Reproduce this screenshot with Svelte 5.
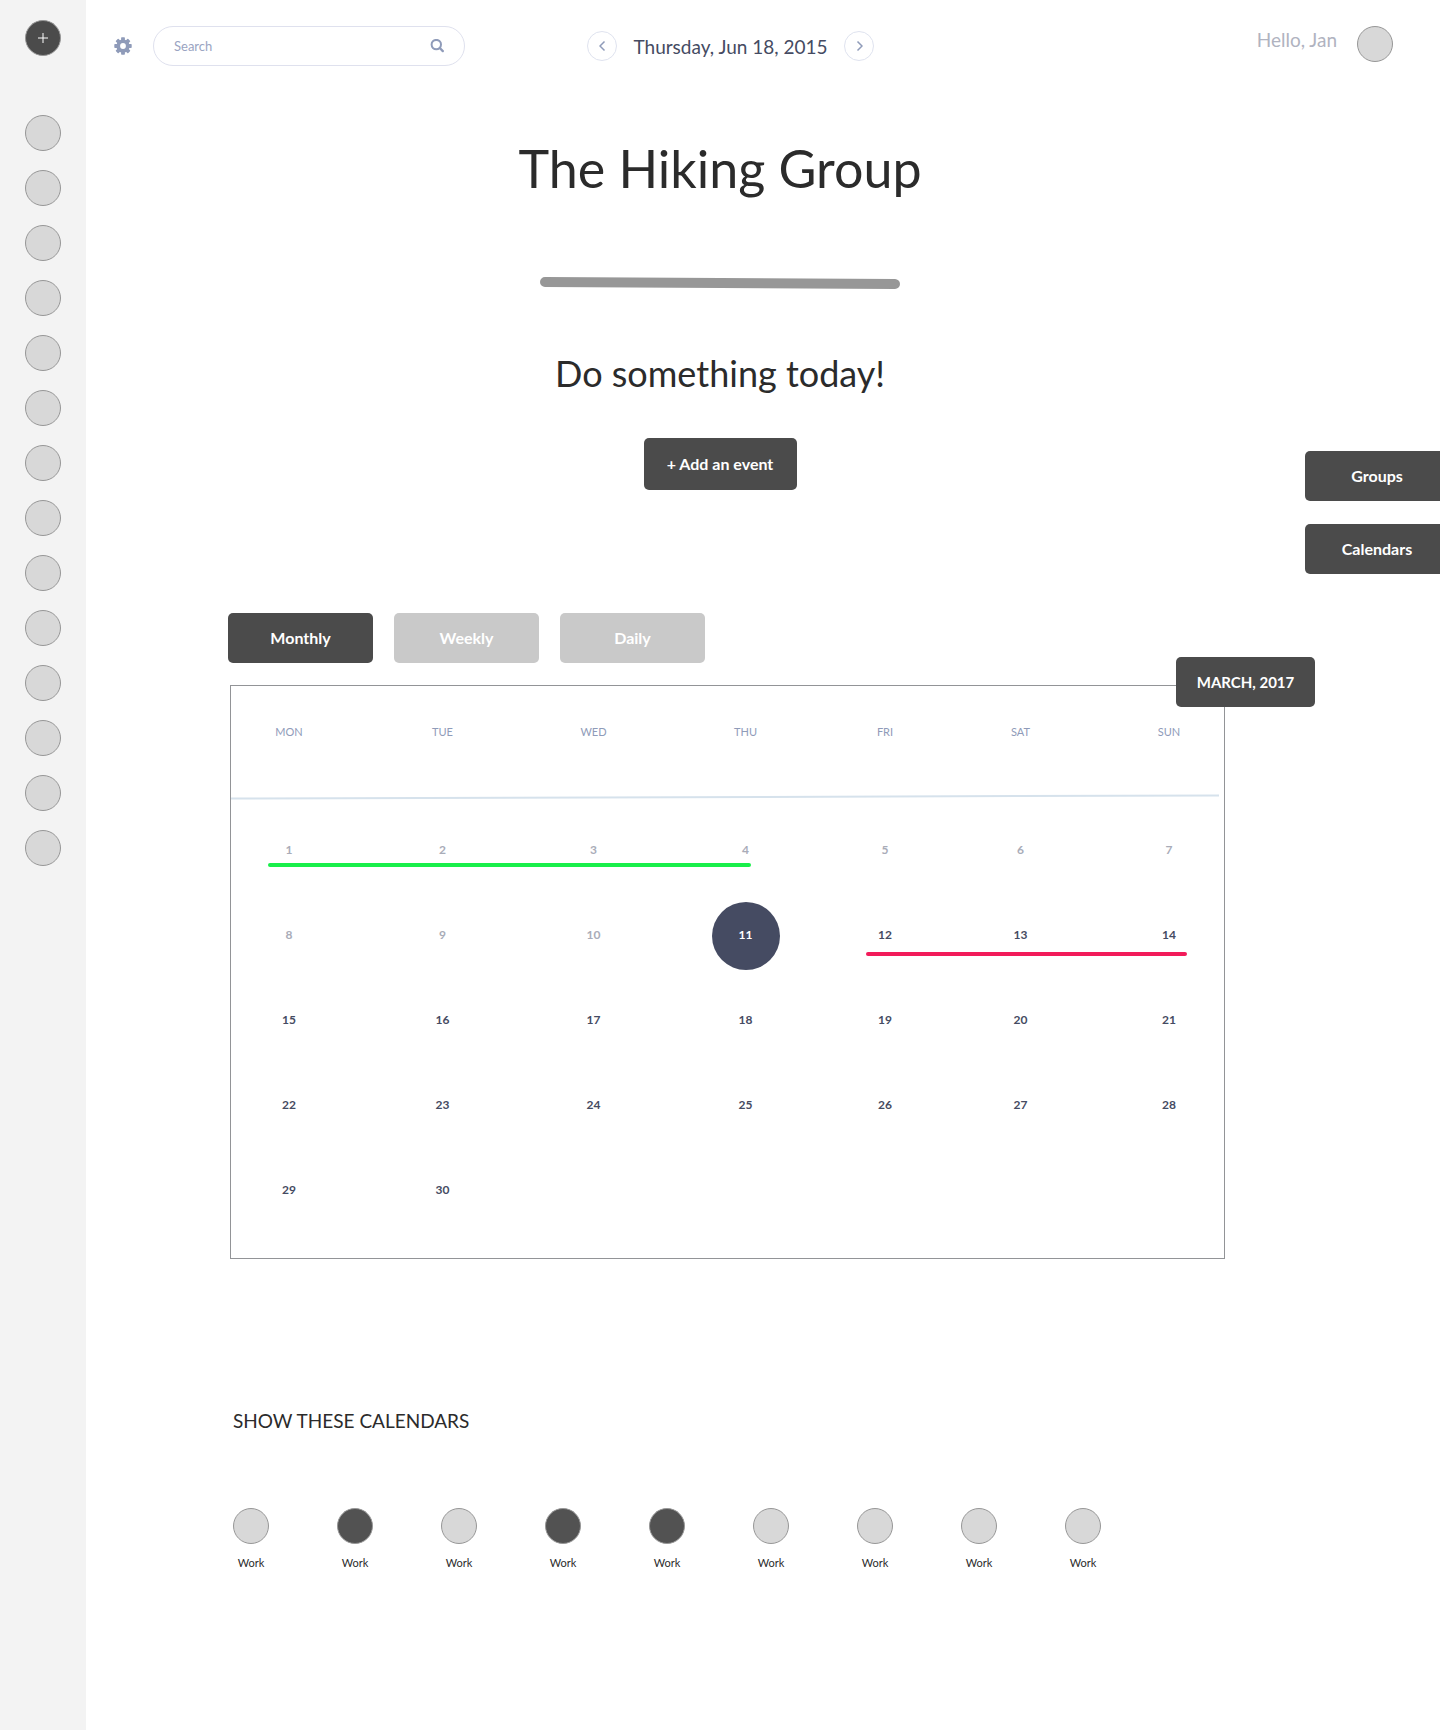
<script>
  const groups = Array.from({ length: 14 }, (_, i) => `Group ${i + 1}`);
  const views = ['Monthly', 'Weekly', 'Daily'];
  let view = $state('Monthly');

  const columns = [
    { name: 'MON', share: 136 },
    { name: 'TUE', share: 151 },
    { name: 'WED', share: 151 },
    { name: 'THU', share: 153 },
    { name: 'FRI', share: 126 },
    { name: 'SAT', share: 145 },
    { name: 'SUN', share: 131 }
  ];
  const total = columns.reduce((sum, c) => sum + c.share, 0);
  const today = 11;
  const weeks = [0, 1, 2, 3, 4].map((w) =>
    [1, 2, 3, 4, 5, 6, 7].map((d) => (w * 7 + d <= 30 ? w * 7 + d : null))
  );

  let calendars = $state(
    [false, true, false, true, true, false, false, false, false].map((shown) => ({ name: 'Work', shown }))
  );
</script>

<div class="app">
  <aside class="sidebar">
    <button class="dot add" aria-label="Add group">
      <svg width="10" height="10" viewBox="0 0 10 10"><path d="M5 0v10M0 5h10" stroke="#fff" stroke-width="1" fill="none" /></svg>
    </button>
    {#each groups as group}
      <button class="dot" aria-label={group}></button>
    {/each}
  </aside>

  <main>
    <header>
      <button class="icon" aria-label="Settings">
        <svg width="18" height="18" viewBox="-9 -9 18 18" fill="#8f9bb9">
          <path fill-rule="evenodd" d="M0-6.6A6.6 6.6 0 1 1 0 6.6 6.6 6.6 0 0 1 0-6.6zM0-2.9A2.9 2.9 0 1 0 0 2.9 2.9 2.9 0 0 0 0-2.9z" />
          {#each [0, 45, 90, 135, 180, 225, 270, 315] as angle}
            <rect x="-1.9" y="-8.7" width="3.8" height="3.6" rx="0.7" transform="rotate({angle})" />
          {/each}
        </svg>
      </button>
      <form class="search" role="search" onsubmit={(e) => e.preventDefault()}>
        <input type="text" placeholder="Search" aria-label="Search" />
        <button class="icon" aria-label="Submit search">
          <svg width="14" height="14" viewBox="0 0 14 14" fill="none" stroke="#8f9bb9">
            <circle cx="6.3" cy="5.6" r="4.7" stroke-width="2" />
            <path d="M9.8 9l3 3.1" stroke-width="2.3" stroke-linecap="round" />
          </svg>
        </button>
      </form>
      <nav class="date" aria-label="Date">
        <button class="step" aria-label="Previous day">
          <svg width="7" height="12" viewBox="0 0 7 12"><path d="M5.5 1.5L1 6l4.500 4.500" /></svg>
        </button>
        <span>Thursday, Jun 18, 2015</span>
        <button class="step" aria-label="Next day">
          <svg width="7" height="12" viewBox="0 0 7 12"><path d="M1.500 1.500L6 6l-4.500 4.500" /></svg>
        </button>
      </nav>
      <div class="user">
        <span>Hello, Jan</span>
        <button class="dot" aria-label="Profile"></button>
      </div>
    </header>

    <section class="hero">
      <div class="intro">
        <h1>The Hiking Group</h1>
        <svg class="rule" width="360" height="12" viewBox="0 0 360 12" aria-hidden="true">
          <path d="M5 5l350 2" stroke="#979797" stroke-width="10" stroke-linecap="round" />
        </svg>
        <p>Do something today!</p>
        <button class="solid add-event">+ Add an event</button>
      </div>
      <nav class="tabs" aria-label="Panels">
        <button class="solid">Groups</button>
        <button class="solid">Calendars</button>
      </nav>
    </section>

    <section class="schedule">
      <div class="views">
        {#each views as name}
          <button class="solid" class:muted={view !== name} onclick={() => (view = name)}>{name}</button>
        {/each}
      </div>
      <div class="calendar">
        <table>
          <colgroup>
            {#each columns as column}
              <col style="width: {(column.share / total) * 100}%" />
            {/each}
          </colgroup>
          <thead>
            <tr>{#each columns as column}<th scope="col">{column.name}</th>{/each}</tr>
          </thead>
          <tbody>
            {#each weeks as week}
              <tr>
                {#each week as day}
                  <td class:past={day && day < today}>
                    {#if day === today}<span class="today">{day}</span>{:else}{day ?? ''}{/if}
                  </td>
                {/each}
              </tr>
            {/each}
          </tbody>
        </table>
        <svg class="divider" viewBox="0 0 990 6" preserveAspectRatio="none" aria-hidden="true">
          <path d="M0 4.5L990 1.5" stroke="#d6e2ec" stroke-width="2" />
        </svg>
        <div class="event green"></div>
        <div class="event red"></div>
        <div class="month">MARCH, 2017</div>
      </div>
    </section>

    <section class="filters">
      <h2>SHOW THESE CALENDARS</h2>
      <div class="list">
        {#each calendars as calendar}
          <label>
            <input type="checkbox" bind:checked={calendar.shown} />
            <span>{calendar.name}</span>
          </label>
        {/each}
      </div>
    </section>
  </main>
</div>

<style>
  :global(body) {
    margin: 0;
    background: #fff;
  }
  .app {
    display: flex;
    min-height: 100vh;
    font-family: Lato, 'Open Sans', sans-serif;
    color: #2b2b2b;
  }
  button,
  input {
    font: inherit;
    margin: 0;
  }
  button {
    padding: 0;
    border: 0;
    background: none;
    cursor: pointer;
  }
  svg {
    display: block;
  }
  .dot {
    flex: none;
    box-sizing: border-box;
    width: 36px;
    height: 36px;
    border: 1px solid #979797;
    border-radius: 50%;
    background: #d8d8d8;
  }
  .sidebar {
    flex: none;
    box-sizing: border-box;
    width: 86px;
    padding-top: 20px;
    display: flex;
    flex-direction: column;
    align-items: center;
    gap: 19px;
    background: #f3f3f3;
  }
  .sidebar .add {
    display: grid;
    place-items: center;
    margin-bottom: 40px;
    background: #4b4b4b;
  }
  main {
    flex: 1;
    min-width: 0;
  }
  header {
    display: flex;
    align-items: center;
    padding: 26px 47px 0 28px;
  }
  .search {
    box-sizing: border-box;
    display: flex;
    align-items: center;
    width: 312px;
    height: 40px;
    margin: 0 122px 0 21px;
    padding: 0 20px;
    border: 1px solid #dfe1ee;
    border-radius: 20px;
  }
  .search input {
    flex: 1;
    min-width: 0;
    padding: 0;
    border: 0;
    outline: 0;
    background: none;
    font-size: 13px;
    line-height: 20px;
    color: #454b62;
  }
  .search input::placeholder {
    color: #9aa4c2;
    opacity: 1;
  }
  .date {
    display: flex;
    align-items: center;
    justify-content: space-between;
    width: 287px;
    font-size: 19px;
    line-height: 24px;
    color: #454b62;
    white-space: nowrap;
  }
  .date span {
    padding-top: 2px;
  }
  .step {
    box-sizing: border-box;
    width: 30px;
    height: 30px;
    display: grid;
    place-items: center;
    border: 1px solid #dfe3ef;
    border-radius: 50%;
  }
  .step path {
    fill: none;
    stroke: #8f9bb9;
    stroke-width: 1.5;
  }
  .user {
    display: flex;
    align-self: flex-start;
    gap: 20px;
    margin-left: auto;
    font-size: 19px;
    line-height: 28px;
    color: #b0b3c0;
    white-space: nowrap;
  }
  .hero {
    display: grid;
    grid-template-columns: 49px 1fr 135px;
    padding-top: 70px;
  }
  .intro {
    grid-column: 2;
    display: flex;
    flex-direction: column;
    align-items: center;
    text-align: center;
    padding-bottom: 84px;
  }
  h1 {
    margin: 0;
    font-size: 52px;
    line-height: 64px;
    font-weight: 400;
  }
  .rule {
    margin: 77px 0 62px;
  }
  .intro p {
    margin: 0 0 42px;
    font-size: 36px;
    line-height: 45px;
  }
  .solid,
  .month {
    width: 145px;
    height: 50px;
    border-radius: 5px;
    background: #4b4b4b;
    color: #fff;
    font-size: 16px;
    line-height: 24px;
    font-weight: 700;
  }
  .add-event {
    width: 153px;
    height: 52px;
  }
  .tabs {
    display: flex;
    flex-direction: column;
    justify-content: flex-end;
    gap: 23px;
  }
  .tabs .solid {
    width: 100%;
    padding-left: 9px;
    border-radius: 5px 0 0 5px;
  }
  .schedule {
    padding: 39px 215px 0 142px;
  }
  .views {
    display: flex;
    gap: 21px;
  }
  .solid.muted {
    background: #c9c9c9;
  }
  .calendar {
    position: relative;
    margin: 22px 0 0 2px;
    padding-bottom: 26px;
    border: 1px solid #929497;
  }
  table {
    width: 100%;
    table-layout: fixed;
    border-collapse: collapse;
    font-size: 12px;
    line-height: 16px;
    text-align: center;
  }
  th {
    height: 83px;
    padding: 38px 0 0;
    vertical-align: top;
    font-size: 11px;
    font-weight: 400;
    color: #8f9bb9;
  }
  td {
    height: 85px;
    padding: 0;
    font-weight: 700;
    color: #454b62;
  }
  td.past {
    color: #a9acb8;
  }
  th:first-child,
  td:first-child {
    padding-right: 20px;
  }
  th:last-child,
  td:last-child {
    padding-left: 21px;
  }
  .today {
    box-sizing: border-box;
    display: grid;
    place-items: center;
    width: 68px;
    height: 68px;
    margin: 3px auto 0;
    padding-bottom: 3px;
    border-radius: 50%;
    background: #454b62;
    color: #fff;
  }
  .divider {
    position: absolute;
    top: 108px;
    left: 0;
    width: 99.5%;
    height: 6px;
  }
  .event {
    position: absolute;
    height: 4px;
    border-radius: 2px;
  }
  .green {
    top: 177px;
    left: 3.7%;
    right: 47.6%;
    background: #19ef4a;
  }
  .red {
    top: 266px;
    left: 63.9%;
    right: 3.7%;
    background: #f21b5a;
  }
  .month {
    position: absolute;
    top: -29px;
    right: -91px;
    width: 139px;
    display: grid;
    place-items: center;
    font-size: 15px;
  }
  .filters {
    padding: 150px 215px 120px 147px;
  }
  h2 {
    margin: 0 0 75px;
    font-size: 19px;
    line-height: 24px;
    font-weight: 400;
  }
  .list {
    display: flex;
    flex-wrap: wrap;
    gap: 24px 68px;
  }
  label {
    display: flex;
    flex-direction: column;
    align-items: center;
    gap: 11px;
    width: 36px;
    font-size: 11px;
    line-height: 16px;
    cursor: pointer;
  }
  label input {
    appearance: none;
    box-sizing: border-box;
    width: 36px;
    height: 36px;
    border: 1px solid #979797;
    border-radius: 50%;
    background: #d8d8d8;
  }
  label input:checked {
    background: #525252;
  }
</style>
